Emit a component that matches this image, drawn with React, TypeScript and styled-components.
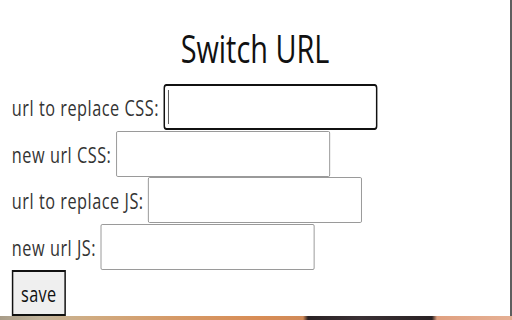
import React from 'react'
import styled, { createGlobalStyle } from 'styled-components'

// the shot is squeezed sideways, so the popup is laid out wide and pressed to fit
const SQUEEZE = 0.74
const POPUP_WIDTH = 510

const GlobalStyle = createGlobalStyle`
  html, body {
    margin: 0;
    padding: 0;
    overflow: hidden;
    background: #ffffff;
  }
`

const Screen = styled.div`
  width: 512px;
  height: 320px;
  display: flex;
  flex-direction: column;
  overflow: hidden;
`

const Popup = styled.div`
  width: ${POPUP_WIDTH}px;
  height: 316px;
  background: #ffffff;
  border-right: 2px solid #5e5e5e;
  overflow: hidden;
`

const Squeezed = styled.div`
  width: ${POPUP_WIDTH / SQUEEZE}px;
  transform: scaleX(${SQUEEZE});
  transform-origin: left top;
  font-family: 'Open Sans', 'Noto Sans', sans-serif;
  display: flex;
  flex-direction: column;
`

const Title = styled.h1`
  margin: 21px 0 0;
  font-size: 39px;
  line-height: 53px;
  font-weight: 400;
  text-align: center;
  color: #111111;
`

const Form = styled.form`
  margin-top: 10px;
  padding-left: 16px;
  display: flex;
  flex-direction: column;
  align-items: flex-start;
`

const Row = styled.div`
  height: 46.5px;
  display: flex;
  align-items: center;
  gap: 6px;
`

const Label = styled.label`
  font-size: 22px;
  letter-spacing: 0.7px;
  color: #333333;
  white-space: nowrap;
`

const Field = styled.div`
  position: relative;
  display: flex;
`

const Input = styled.input<{ $focused?: boolean }>`
  box-sizing: border-box;
  width: 289px;
  height: 46px;
  margin: 0;
  padding: 0 4px;
  font: inherit;
  font-size: 21px;
  background: #ffffff;
  border: ${(props) => (props.$focused ? '2px solid #111111' : '1px solid #8a8a8a')};
  border-radius: ${(props) => (props.$focused ? '4px' : '2px')};
  outline: none;
`

const Caret = styled.span`
  position: absolute;
  left: 6px;
  top: 6px;
  width: 1.4px;
  height: 34px;
  background: #222222;
  pointer-events: none;
`

const SaveButton = styled.button`
  box-sizing: border-box;
  width: 73px;
  height: 46px;
  margin: 0;
  padding: 0;
  font: inherit;
  font-size: 22px;
  letter-spacing: 0.5px;
  color: #111111;
  background: #efefef;
  border: 2px solid #111111;
  border-radius: 0;
`

const Backdrop = styled.div`
  height: 4px;
  background: linear-gradient(
    to right,
    #a89c88 0px,
    #c2b49c 40px,
    #d0ab80 90px,
    #d59a68 170px,
    #d88c55 260px,
    #d08a58 303px,
    #2a2224 308px,
    #3a3034 360px,
    #2a2224 432px,
    #e0a080 437px,
    #e6b094 512px
  );
`

const fields = [
  { id: 'oldCss', label: 'url to replace CSS:', focused: true },
  { id: 'newCss', label: 'new url CSS:' },
  { id: 'oldJs', label: 'url to replace JS:' },
  { id: 'newJs', label: 'new url JS:' },
]

export default function App() {
  return (
    <>
      <GlobalStyle />
      <Screen>
        <Popup>
          <Squeezed>
            <Title>Switch URL</Title>
            <Form onSubmit={(e) => e.preventDefault()}>
              {fields.map((f) => (
                <Row key={f.id}>
                  <Label htmlFor={f.id}>{f.label}</Label>
                  <Field>
                    <Input id={f.id} type="text" $focused={f.focused} />
                    {f.focused && <Caret />}
                  </Field>
                </Row>
              ))}
              <SaveButton type="submit">save</SaveButton>
            </Form>
          </Squeezed>
        </Popup>
        <Backdrop />
      </Screen>
    </>
  )
}
